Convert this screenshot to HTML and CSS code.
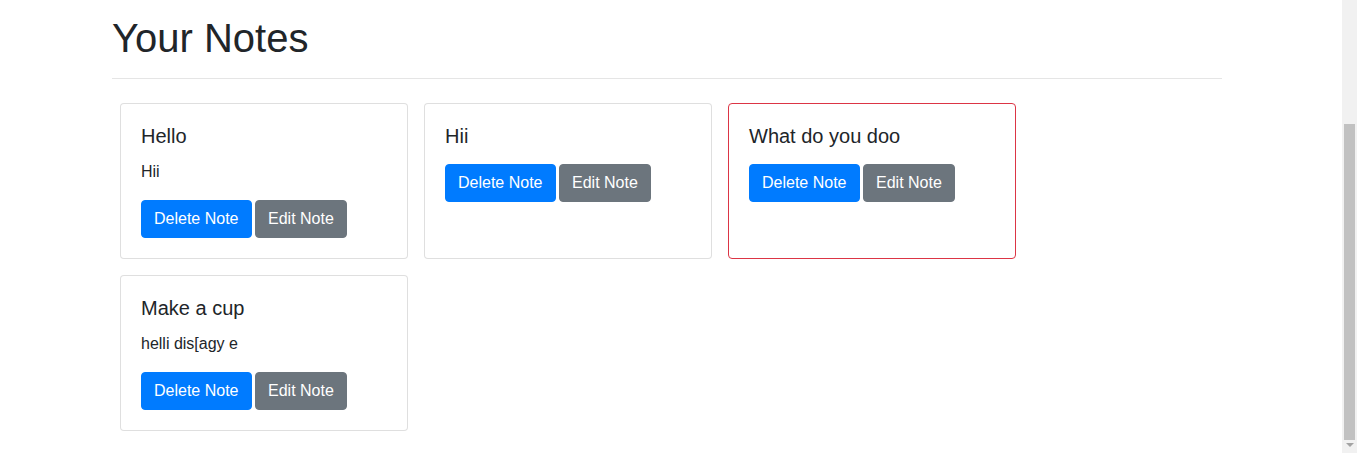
FILE: index.html
```html
<!DOCTYPE html>
<html lang="en">
<head>
<meta charset="utf-8">
<title>Your Notes</title>
<link rel="stylesheet" href="styles.css">
</head>
<body>
<div class="page">
  <main class="content">
    <h1 class="title">Your Notes</h1>
    <hr class="divider">
    <div class="notes">
      <div class="card">
        <h5 class="card-title">Hello</h5>
        <p class="card-text">Hii</p>
        <div class="actions">
          <button class="btn btn-primary">Delete Note</button>
          <button class="btn btn-secondary">Edit Note</button>
        </div>
      </div>
      <div class="card">
        <h5 class="card-title">Hii</h5>
        <p class="card-text"></p>
        <div class="actions">
          <button class="btn btn-primary">Delete Note</button>
          <button class="btn btn-secondary">Edit Note</button>
        </div>
      </div>
      <div class="card card-danger">
        <h5 class="card-title">What do you doo</h5>
        <p class="card-text"></p>
        <div class="actions">
          <button class="btn btn-primary">Delete Note</button>
          <button class="btn btn-secondary">Edit Note</button>
        </div>
      </div>
      <div class="card">
        <h5 class="card-title">Make a cup</h5>
        <p class="card-text">helli dis[agy e</p>
        <div class="actions">
          <button class="btn btn-primary">Delete Note</button>
          <button class="btn btn-secondary">Edit Note</button>
        </div>
      </div>
    </div>
  </main>
  <div class="scrollbar">
    <div class="scroll-space"></div>
    <div class="scroll-thumb"></div>
    <div class="scroll-arrow"></div>
  </div>
</div>
</body>
</html>
```

FILE: styles.css
```css
* { box-sizing: border-box; }
html, body { margin: 0; padding: 0; height: 100%; }
body {
  font-family: "Liberation Sans", Arial, sans-serif;
  color: #212529;
  background: #fff;
  font-size: 16px;
  line-height: 1.5;
  overflow: hidden;
}
.page {
  display: flex;
  height: 453px;
}
.content {
  flex: 1;
  padding: 14px 0 0 112px;
}
.title {
  width: 1110px;
  margin: 0;
  font-size: 40px;
  font-weight: 500;
  line-height: 48px;
}
.divider {
  width: 1110px;
  margin: 16px 0 0 0;
  border: 0;
  border-top: 1px solid rgba(0,0,0,.1);
  height: 0;
}
.notes {
  display: grid;
  grid-template-columns: repeat(3, 288px);
  column-gap: 16px;
  row-gap: 16px;
  margin: 24px 0 0 8px;
}
.card {
  border: 1px solid rgba(0,0,0,.125);
  border-radius: 4px;
  padding: 20px;
  background: #fff;
}
.card-danger { border-color: #dc3545; }
.card-title {
  margin: 0 0 12px 0;
  font-size: 20px;
  font-weight: 500;
  line-height: 24px;
}
.card-text {
  margin: 0 0 16px 0;
}
.actions {
  display: flex;
  gap: 3.5px;
}
.btn {
  font-family: inherit;
  font-size: 16px;
  line-height: 24px;
  padding: 6px 12px;
  border: 1px solid transparent;
  border-radius: 4px;
  color: #fff;
  cursor: pointer;
}
.btn-primary { background: #007bff; border-color: #007bff; }
.btn-secondary { background: #6c757d; border-color: #6c757d; }
.scrollbar {
  width: 15px;
  flex: none;
  background: #f1f1f1;
  display: flex;
  flex-direction: column;
  align-items: center;
}
.scroll-space { height: 124px; }
.scroll-thumb {
  width: 11px;
  height: 316px;
  background: #c1c1c1;
}
.scroll-arrow {
  margin-top: 3px;
  width: 0;
  height: 0;
  border-left: 4px solid transparent;
  border-right: 4px solid transparent;
  border-top: 4px solid #a3a3a3;
}
```
